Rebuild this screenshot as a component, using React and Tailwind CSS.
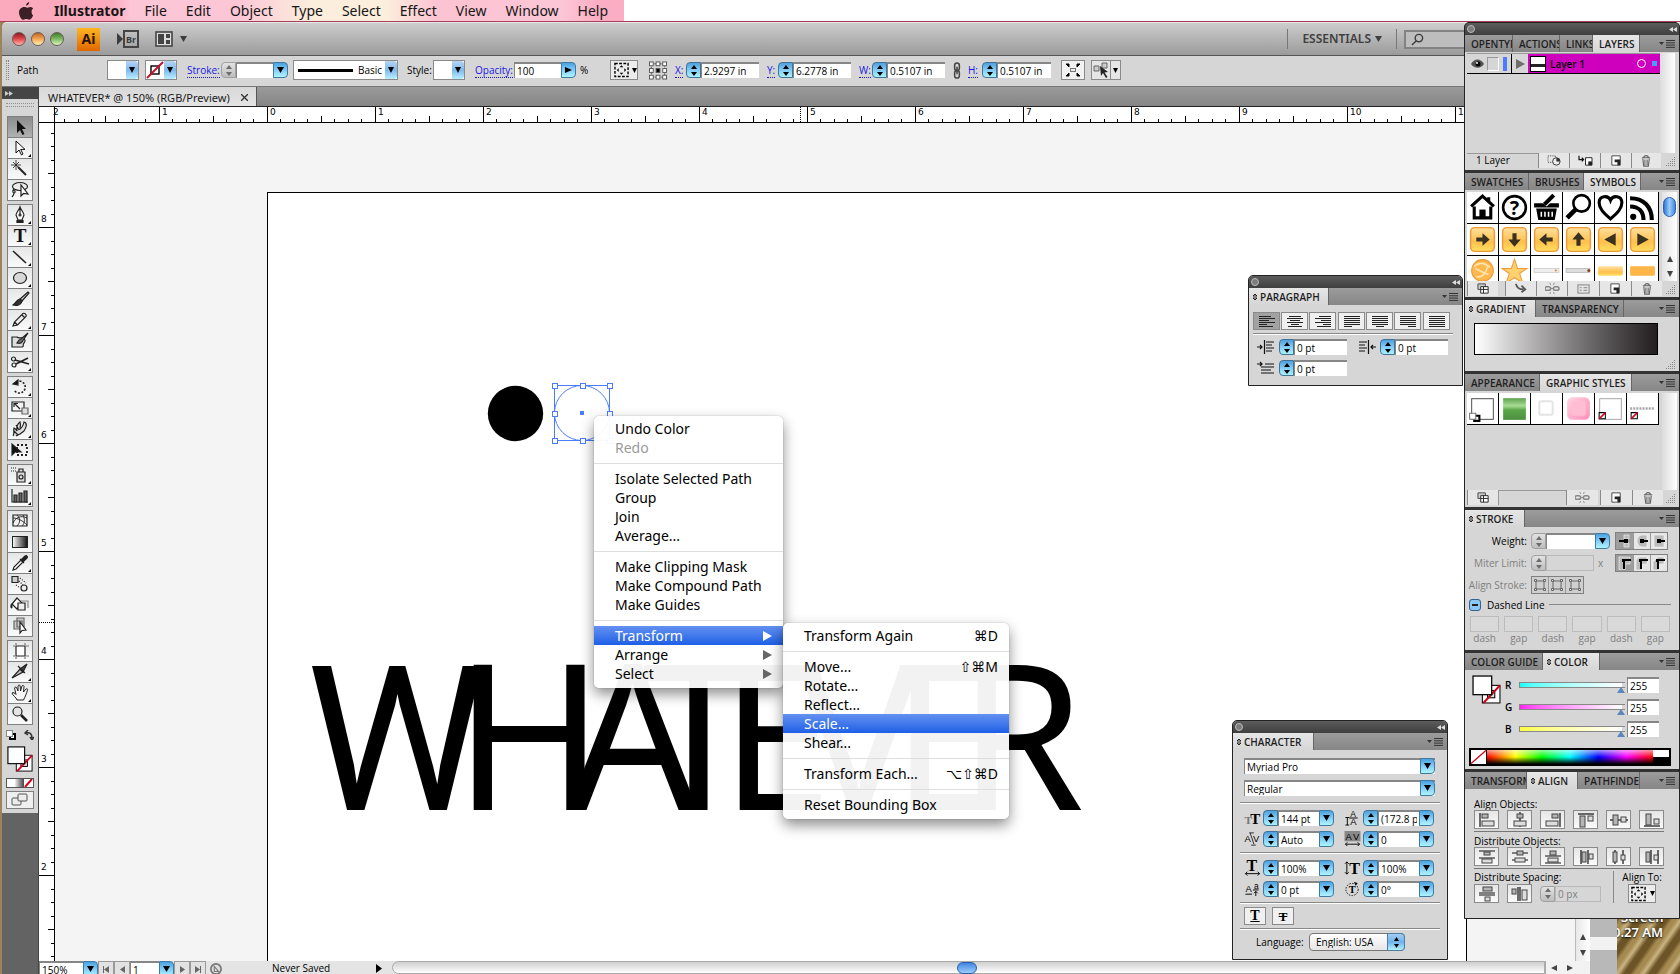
import React from 'react';

const UI = "font-['Noto_Sans',sans-serif]";
const SMALL = "font-['Open_Sans',sans-serif] text-[10px] leading-[12px]";

/* ---------- shared bits ---------- */

const Tri = ({ dir = 'down', className = 'h-2 w-2' }) => {
  const d = {
    down: 'M0 0h8L4 8z',
    up: 'M0 8h8L4 0z',
    right: 'M0 0v8l8-4z',
    left: 'M8 0v8L0 4z',
  }[dir];
  return (
    <svg viewBox="0 0 8 8" preserveAspectRatio="none" className={className} fill="currentColor">
      <path d={d} />
    </svg>
  );
};

const Stepper = ({ name, dim }) => (
  <span
    className={
      'flex h-4 w-[15px] shrink-0 flex-col items-center justify-center gap-[3px] rounded-l-[4px] border ' +
      (dim
        ? 'border-[#a0a0a0] bg-linear-to-b from-[#e2e2e2] to-[#bebebe] text-[#6c6c6c]'
        : 'border-[#3f7398] bg-linear-to-b from-[#4fa0dc] via-[#82cbf5] to-[#a9f2fd] text-black')
    }
  >
    <button type="button" aria-label={name + ' up'} disabled={dim}>
      <Tri dir="up" className="h-1 w-[6px]" />
    </button>
    <button type="button" aria-label={name + ' down'} disabled={dim}>
      <Tri className="h-1 w-[6px]" />
    </button>
  </span>
);

const DropButton = ({ name, dir }) => (
  <button
    type="button"
    aria-label={name + ' options'}
    className="flex h-4 w-[15px] shrink-0 items-center justify-center rounded-r-[4px] border border-[#3f7aa3] bg-linear-to-b from-[#4aa2e0] via-[#82ccf7] to-[#aef5ff] text-black"
  >
    <Tri dir={dir} className="h-[6px] w-[7px]" />
  </button>
);

const Field = ({ name, value, width, stepper, drop, disabled, dim, dropDir }) => (
  <span className="flex h-4 items-center">
    {stepper && <Stepper name={name} dim={dim || disabled} />}
    <input
      type="text"
      aria-label={name}
      defaultValue={value}
      disabled={disabled}
      className={
        SMALL + ' h-4 px-[2px] ' + width +
        (disabled ? ' border border-[#b9b9b9] bg-[#d6d6d6] text-[#808080]' : ' border-t-2 border-l border-[#868686] bg-white text-black')
      }
    />
    {drop && <DropButton name={name} dir={dropDir} />}
  </span>
);

const PickList = ({ name, value, width }) => (
  <span className={'relative flex h-4 items-center ' + width}>
    <select
      aria-label={name}
      className={SMALL + ' h-4 w-full appearance-none border-t-2 border-l border-[#868686] bg-white pl-[2px] text-black'}
    >
      <option>{value}</option>
    </select>
    <span className="pointer-events-none absolute right-0 flex h-4 w-[15px] items-center justify-center rounded-r-[4px] border border-[#3f7aa3] bg-linear-to-b from-[#4aa2e0] via-[#82ccf7] to-[#aef5ff]">
      <Tri className="h-[6px] w-[7px]" />
    </span>
  </span>
);

/* white fill or "none" swatch with a drop arrow */
const SwatchButton = ({ name, none }) => (
  <button type="button" aria-label={name} className="flex h-5 w-8 shrink-0 border border-[#8a8a8a] bg-white">
    <span className="flex h-full flex-1 items-center justify-center">
      {none && (
        <svg viewBox="0 0 18 18" className="h-[18px] w-[18px]">
          <rect x="5" y="5" width="8" height="8" fill="none" stroke="#000" strokeWidth="1.4" />
          <path d="M1 17L17 1" stroke="#c8102e" strokeWidth="2" />
        </svg>
      )}
    </span>
    <span className="flex h-full w-3 items-center justify-center rounded-r-[3px] bg-linear-to-b from-[#b5d5f2] via-[#7fb9ec] to-[#b8efff]">
      <Tri className="h-[6px] w-[6px]" />
    </span>
  </button>
);

const NoneStroke = ({ className }) => (
  <svg viewBox="0 0 28 28" className={className}>
    <rect x="10" y="10" width="17" height="17" fill="#fff" stroke="#000" strokeWidth="1" />
    <rect x="15" y="15" width="7" height="7" fill="#ddd" stroke="#000" />
    <path d="M11 27L27 10" stroke="#d0021b" strokeWidth="2" />
    <rect x="1" y="1" width="18" height="18" fill="#fff" stroke="#000" strokeWidth="1.2" />
  </svg>
);

/* ---------- menu bar ---------- */

const MENUS = ['File', 'Edit', 'Object', 'Type', 'Select', 'Effect', 'View', 'Window', 'Help'];

const MenuBar = () => (
  <nav className="h-[22px] shrink-0 border-b border-[#a5405a] bg-white">
    <div className="flex h-full w-[624px] items-center bg-[linear-gradient(90deg,#fba9bd_0%,#fba9bd_18%,#fdc6d6_21%,#fdc6d6_38%,#fbeedd_50%,#fbeedd_62%,#fcc3d2_70%,#fcc6d6_90%,#fbaec3_96%)] pl-[18px] text-[14px] leading-[20px] text-[#161616]">
      <svg viewBox="0 0 16 18" className="mr-5 h-[18px] w-4" fill="#3c2027">
        <path d="M11.2 0c.1 1.700-1.200 3.500-3.100 3.700C7.900 2 9.500.200 11.200 0zM13.600 9.500c0-1.800 1.300-2.600 1.600-2.900-1-1.500-2.400-1.700-3-1.700-1.300-.1-2.500.8-3.200.8-.6 0-1.600-.8-2.700-.7C3.300 5 1 7.300 1 10.500 1 14 3.500 17.800 5.500 17.800c1 0 1.500-.7 2.800-.7s1.700.7 2.800.7c1.800 0 3.400-2.500 4-4.500-.9-.4-1.500-1.800-1.500-3.800z" />
      </svg>
      <button type="button" className="mr-[19px] font-bold">Illustrator</button>
      <div className="flex gap-[19px]">
        {MENUS.map((m) => (
          <button key={m} type="button">{m}</button>
        ))}
      </div>
    </div>
  </nav>
);

/* ---------- title + control bars ---------- */

const LIGHTS = [
  { name: 'Close', cls: 'from-[#8e1a1c] via-[#e0484c] to-[#ffb3ae]' },
  { name: 'Minimize', cls: 'from-[#c0661c] via-[#f4a850] to-[#fff0b8]' },
  { name: 'Zoom', cls: 'from-[#3d7d28] via-[#7dbb60] to-[#dcf8bd]' },
];

const TitleBar = () => (
  <div className="flex h-[33px] shrink-0 items-center rounded-tl-[5px] border-t border-[#e8e8e8] bg-linear-to-b from-[#cdcdcd] to-[#9b9b9b] pl-[10px]">
    <div className="flex gap-[5px]">
      {LIGHTS.map((l) => (
        <button
          key={l.name}
          type="button"
          aria-label={l.name}
          className={'h-[14px] w-[14px] rounded-full border border-[#6d5a5a] bg-linear-to-b ' + l.cls}
        />
      ))}
    </div>
    <span className="ml-[13px] flex h-[23px] w-[23px] items-center justify-center bg-linear-to-b from-[#fdb520] to-[#e06500] text-[14px] font-bold leading-none text-[#2a1500]">
      Ai
    </span>
    <button type="button" aria-label="Bridge" className="ml-[17px] flex h-[18px] items-center text-[#3c3c3c]">
      <Tri dir="right" className="h-3 w-[6px]" />
      <span className="flex h-[18px] w-4 items-center justify-center border-2 border-[#454545] text-[9px] font-bold leading-none">Br</span>
    </button>
    <button type="button" aria-label="Arrange documents" className="ml-[16px] flex items-center gap-[7px] text-[#3c3c3c]">
      <svg viewBox="0 0 18 16" className="h-4 w-[18px]">
        <rect x="1" y="1" width="16" height="14" fill="#ddd" stroke="#444" strokeWidth="1.6" />
        <path d="M3 3h6v10H3zM11 3h4v4h-4zM11 9h4v4h-4z" fill="#444" />
      </svg>
      <Tri className="h-[6px] w-[7px]" />
    </button>
    <div className="mr-[215px] ml-auto flex items-center">
      <div className="flex h-5 items-center border-x border-[#777] px-[14px]">
        <button type="button" className="flex items-center gap-1 text-[12px] font-semibold text-[#3f3f3f]">
          ESSENTIALS <Tri className="h-[6px] w-[7px]" />
        </button>
      </div>
      <label className="ml-[7px] flex h-[19px] w-[61px] items-center border-2 border-r-0 border-[#828282] bg-[#bdbdbd] pl-[5px]">
        <svg viewBox="0 0 14 14" className="h-[13px] w-[13px] shrink-0" fill="none" stroke="#3a3a3a" strokeWidth="1.500">
          <circle cx="8.500" cy="5.500" r="4" />
          <path d="M5.500 8.500L1 13" />
        </svg>
        <input type="search" aria-label="Search" className="w-8 bg-transparent text-[10px]" />
      </label>
    </div>
  </div>
);

const Link = ({ children }) => (
  <a href="#panel" className="border-b border-dotted border-[#1717e6] leading-[13px] text-[#1717e6]">
    {children}
  </a>
);

const AlignIcon = () => (
  <svg viewBox="0 0 16 16" className="h-4 w-[15px]">
    <rect x="1" y="1" width="14" height="14" fill="none" stroke="#000" strokeWidth="1.500" strokeDasharray="3 1.500" />
    <path d="M8 3l2 2H6zM8 13l2-2H6zM3 8l2-2v4zM13 8l-2-2v4z" fill="#000" />
  </svg>
);

const ControlBar = () => (
  <div className={SMALL + ' flex h-[32px] shrink-0 items-center border-y border-t-[#555] border-b-[#777] bg-[#d6d6d6] pb-[2px] text-black'}>
    <span className="ml-1 h-5 w-[3px] border-x border-dotted border-[#8a8a8a]" />
    <span className="ml-2 w-[90px]">Path</span>
    <SwatchButton name="Fill" />
    <span className="w-[6px]" />
    <SwatchButton name="Stroke color" none />
    <span className="ml-[10px] w-[34px]"><Link>Stroke:</Link></span>
    <Field name="Stroke weight" value="" width="w-[37px]" stepper dim />
    <DropButton name="Stroke weight" />
    <button type="button" aria-label="Brush" className="ml-[5px] flex h-5 w-[105px] items-center border border-[#8a8a8a] bg-white pl-[4px]">
      <span className="h-[3px] w-[55px] bg-black" />
      <span className="ml-[5px] flex-1 text-left">Basic</span>
      <span className="flex h-full w-3 items-center justify-center rounded-r-[3px] bg-linear-to-b from-[#b5d5f2] via-[#7fb9ec] to-[#b8efff]">
        <Tri className="h-[6px] w-[6px]" />
      </span>
    </button>
    <span className="ml-[9px] w-[26px]">Style:</span>
    <SwatchButton name="Graphic style" />
    <span className="ml-[10px] w-[39px]"><Link>Opacity:</Link></span>
    <Field name="Opacity" value="100" width="w-[47px]" drop dropDir="right" />
    <span className="ml-1 w-[30px]">%</span>
    <button type="button" aria-label="Align to" className="flex h-5 w-7 items-center gap-[3px] border border-[#8a8a8a] bg-[#ececec] pl-[3px]">
      <AlignIcon /> <Tri className="h-[5px] w-[5px]" />
    </button>
    <svg viewBox="0 0 20 20" className="ml-[10px] h-[19px] w-5" fill="#fff" stroke="#555">
      <path d="M3 3h14v14H3z" fill="none" strokeDasharray="2 1" />
      {[3, 10, 17].map((y) => [3, 10, 17].map((x) => (
        <rect key={x + '-' + y} x={x - 2} y={y - 2} width="4" height="4" fill={x === 10 && y === 10 ? '#000' : '#fff'} />
      )))}
    </svg>
    <span className="ml-[7px] w-[11px]"><Link>X:</Link></span>
    <Field name="X" value="2.9297 in" width="w-[58px]" stepper />
    <span className="ml-2 w-[11px]"><Link>Y:</Link></span>
    <Field name="Y" value="6.2778 in" width="w-[58px]" stepper />
    <span className="ml-2 w-[13px]"><Link>W:</Link></span>
    <Field name="W" value="0.5107 in" width="w-[58px]" stepper />
    <svg viewBox="0 0 10 18" className="ml-[7px] h-[17px] w-[10px]" fill="none" stroke="#444" strokeWidth="1.600">
      <rect x="2.500" y="1" width="5" height="8" rx="2.500" />
      <rect x="2.500" y="9" width="5" height="8" rx="2.500" />
      <path d="M5 5v8" />
    </svg>
    <span className="ml-[6px] w-[14px]"><Link>H:</Link></span>
    <Field name="H" value="0.5107 in" width="w-[54px]" stepper />
    <button type="button" aria-label="Isolate" className="ml-[10px] flex h-5 w-6 items-center justify-center border border-[#8a8a8a] bg-[#f2f2f2]">
      <svg viewBox="0 0 16 14" className="h-[14px] w-4" fill="#000">
        <path d="M1 1h3v3zM15 1h-3v3zM1 13h3v-3zM15 13h-3v-3z" stroke="#000" />
        <rect x="5.500" y="5.500" width="5" height="3" fill="#eee" stroke="#777" />
      </svg>
    </button>
    <button type="button" aria-label="Select similar" className="ml-[6px] flex h-5 w-[30px] items-center border border-[#8a8a8a] bg-[#e6e6e6]">
      <svg viewBox="0 0 18 18" className="h-[18px] w-[18px]">
        <path d="M2 5h5v5H2zM10 2h5v5h-5z" fill="#ccc" stroke="#666" />
        <path d="M8 5l1 10 2-3 3 5 1.500-1-3-4.500 3.500-.5z" fill="#222" />
      </svg>
      <span className="flex h-full flex-1 items-center justify-center border-l border-[#8a8a8a]">
        <Tri className="h-[5px] w-[5px]" />
      </span>
    </button>
  </div>
);

/* ---------- tools ---------- */

const g = { fill: 'none', stroke: '#222', strokeWidth: 1.2 };

const TOOLS = [
  [
    { name: 'Selection', active: true, art: <path d="M9 3v13l3-3 2.500 5 2-1-2.500-5h4z" fill="#111" /> },
    { name: 'Direct Selection', more: true, art: <path d="M8 3v12l3-3 2.500 5 1.500-1-2.300-4.600H17z" fill="#fff" stroke="#111" /> },
    { name: 'Magic Wand', art: <g {...g}><path d="M10 8l8 8" strokeWidth="2" /><path d="M8 1v10M3 6h10M5 3l6 6M11 3L5 9" strokeWidth=".8" /></g> },
    { name: 'Lasso', art: <g {...g}><ellipse cx="12" cy="6.500" rx="7.500" ry="4" /><path d="M6 9c-2 2-1 4 0 4s2-2 0-3M6 13c0 2-1 3-2 4" /><path d="M13 5v11l2.500-2.500L20 14z" fill="#fff" /></g> },
  ],
  [
    { name: 'Pen', more: true, art: <g {...g}><path d="M12 2c-1 3-4 6-4 8l2 5h4l2-5c0-2-3-5-4-8zM12 2v7" fill="#fff" /><circle cx="12" cy="10" r="1" /><path d="M9 15.500h6v2H9z" fill="#222" /></g> },
    { name: 'Type', more: true, art: <text x="12" y="16" textAnchor="middle" fontFamily="Liberation Serif, serif" fontSize="19" fontWeight="bold" fill="#111">T</text> },
    { name: 'Line', more: true, art: <path d="M5 4l13 12" {...g} strokeWidth="1.600" /> },
    { name: 'Ellipse', more: true, art: <ellipse cx="12" cy="10" rx="6.500" ry="5.500" fill="#d8d8d8" stroke="#222" strokeWidth="1.200" /> },
    { name: 'Paintbrush', art: <g {...g}><path d="M20 3l-8 7 2 2 7-8z" fill="#ccc" /><path d="M12 10c-3 0-3 3-7 6 4 1 8 0 9-4z" fill="#333" /></g> },
    { name: 'Pencil', more: true, art: <path d="M5 16l1.500-4L15 3.500c1.500-.8 4 1 3 3L9.500 15zM6.500 12l3 3M14 5l3 3" {...g} fill="#eee" /> },
    { name: 'Blob Brush', art: <g {...g}><path d="M4 6h5c2 2 4 0 6 1 3 1 2 4 1 5-2 2 1 4-3 4H4z" fill="#ddd" /><path d="M20 2l-7 6c-3 1-2 2-4 4 3 1 5-.500 6-2.500z" fill="#777" /></g> },
    { name: 'Scissors', more: true, art: <g {...g}><circle cx="5.500" cy="7" r="2" /><circle cx="6" cy="13" r="2" /><path d="M7 8l14 4M8 12l12-6" strokeWidth="1.800" /></g> },
  ],
  [
    { name: 'Rotate', more: true, art: <g {...g}><path d="M8 5a6 6 0 1 1-2 8" strokeDasharray="2 1.500" strokeWidth="1.600" /><path d="M5 7l5-4v5z" fill="#111" /></g> },
    { name: 'Scale', more: true, art: <g {...g}><path d="M4 4h12v9H4z" fill="#f4f4f4" /><path d="M14 10h6v6h-6z" fill="#ddd" stroke="#666" /><path d="M12 11L7 6M6 9V5.500h4" /></g> },
    { name: 'Warp', more: true, art: <path d="M5 17c2-2 0-6 1-8 2 1 3 3 3 3s-1-6 3-9c1 3 0 7 0 7s3-2 4-7c4 1 2 6 0 9l-4 3-4 2M8 6l3 5M6 12l4 4" {...g} fill="#ddd" /> },
    { name: 'Free Transform', art: <g {...g}><path d="M9 5h10v10H9z" strokeDasharray="2 2" strokeWidth="1.800" /><path d="M4 4v11l3-3 6 0z" fill="#111" /></g> },
  ],
  [
    { name: 'Symbol Sprayer', more: true, art: <g {...g}><path d="M9 7h8v10H9zM11 7V4h4v3" fill="#ddd" /><circle cx="13" cy="12" r="2" /><path d="M3 3h6M3 6h5" strokeDasharray="1 1" /></g> },
    { name: 'Column Graph', more: true, art: <g {...g}><path d="M4 3v13h16" /><path d="M6 9h3v7H6zM11 7h3v9h-3zM16 5h3v11h-3z" fill="#666" /></g> },
  ],
  [
    { name: 'Mesh', art: <g {...g}><path d="M5 4h14v11H5z" /><path d="M5 12c3-6 8-8 14-5M9 4c4 4 3 8 0 11M15 4c2 4 2 8-1 11M5 7c5 0 10 3 14 7" strokeWidth=".9" /></g> },
    { name: 'Gradient', art: <g><rect x="4.500" y="4.500" width="15" height="11" fill="url(#toolGrad)" stroke="#222" /></g> },
    { name: 'Eyedropper', more: true, art: <g {...g}><path d="M5 17l1-3 7-7 2 2-7 7z" fill="#fff" /><path d="M12 6l4 4M13 7l4-4c2-1 3 1 2 2l-4 4z" fill="#222" /></g> },
    { name: 'Blend', art: <g {...g}><path d="M4 2.500h6v6H4z" fill="#ccc" /><circle cx="16" cy="14" r="3" fill="#eee" /><path d="M12 4l6 5M11 7l4 4M8 11l4 3" strokeDasharray="1 1.500" /></g> },
    { name: 'Live Paint', art: <g {...g}><path d="M4 9l5-6 5 5-5 6z" fill="#fff" /><path d="M10 8h7v7h-7z" fill="#eee" /><path d="M13 6h7v7" stroke="#888" /><path d="M4 9c-1 2-1 3 0 4" strokeWidth="2" /></g> },
    { name: 'Live Paint Selection', art: <g {...g}><path d="M6 5h8v8H6zM9 2h7v9H9z" fill="#ccc" stroke="#666" /><path d="M12 6v11l2-2.500 4-.500z" fill="#fff" /></g> },
  ],
  [
    { name: 'Artboard', art: <g {...g}><path d="M8 5h9v10H8z" fill="#fff" /><path d="M8 2v2M17 2v2M8 16v2M17 16v2M5 5h2M5 15h2M18 5h3M18 15h3" stroke="#777" /></g> },
    { name: 'Slice', more: true, art: <g {...g}><path d="M4 16l8-9 3 3z" fill="#bbb" /><path d="M12 7l7-5-4 8zM10 4l7 7" fill="#444" /></g> },
    { name: 'Hand', more: true, art: <path d="M9 17c-1-3-4-4-5-7 1-1 3 0 4 1.500L6.500 5c.5-1.500 2-1 2.300 0L10 8V3c.3-1.300 2-1.300 2.200 0l.3 5 1.500-5c.6-1.200 2-.6 2 .6L15.500 9 18 6c1-.8 2 .1 1.500 1.200-1 3-2 6-4 9.800z" fill="#f6f6f6" stroke="#222" /> },
    { name: 'Zoom', art: <g {...g}><circle cx="9.500" cy="7.500" r="4.500" fill="#e4e4e4" /><path d="M13 11l6 6" strokeWidth="2.600" /></g> },
  ],
];

const ToolBox = () => (
  <aside className="flex w-[37px] shrink-0 flex-col border-r border-[#444] bg-[#636363]">
    <div className="flex h-3 items-center bg-[#454545] pl-[3px] text-[#ccc]">
      <Tri dir="right" className="h-[5px] w-[4px]" />
      <Tri dir="right" className="h-[5px] w-[4px]" />
    </div>
    <div className="flex flex-col items-center bg-[#d6d6d6] pb-1">
      <div className="my-1 h-[4px] w-7 border-y border-dotted border-[#909090]" />
      <div className="mt-[5px] flex flex-col gap-[3px]">
        {TOOLS.map((group, i) => (
          <div key={i} className="flex w-[26px] flex-col gap-px border border-[#808080] bg-[#808080]">
            {group.map((t) => (
              <button
                key={t.name}
                type="button"
                aria-label={t.name}
                className={'relative h-5 w-6 ' + (t.active ? 'bg-linear-to-b from-[#8d8d8d] to-[#b0b0b0]' : 'bg-linear-to-b from-[#e6e6e6] to-[#fafafa]')}
              >
                <svg viewBox="0 0 24 20" className="h-5 w-6">
                  <defs>
                    <linearGradient id="toolGrad"><stop stopColor="#fff" /><stop offset="1" stopColor="#111" /></linearGradient>
                  </defs>
                  {t.art}
                  {t.more && <path d="M23 16v3h-3z" fill="#000" />}
                </svg>
              </button>
            ))}
          </div>
        ))}
      </div>
      <div className="mt-[5px] flex w-7 justify-between">
        <svg viewBox="0 0 10 10" className="h-[10px] w-[10px]">
          <rect x="4" y="4" width="5" height="5" fill="#fff" stroke="#000" strokeWidth="2" />
          <rect x=".5" y=".5" width="6" height="6" fill="#fff" stroke="#888" />
        </svg>
        <svg viewBox="0 0 10 10" className="h-[10px] w-[10px]" fill="none" stroke="#333" strokeWidth="1.500">
          <path d="M2 3c4-1 6 1 6 5M4 0L1 3l3 2M6 7l2 3 2-3" />
        </svg>
      </div>
      <button type="button" aria-label="Fill and stroke" className="mt-[6px]">
        <NoneStroke className="h-[26px] w-[26px]" />
      </button>
      <div className="mt-[6px] flex h-[10px] w-7 border border-[#555]">
        <span className="flex-1 bg-white" />
        <span className="w-[9px] bg-linear-to-r from-[#eee] to-[#444]" />
        <svg viewBox="0 0 9 8" className="h-2 w-[9px] bg-white"><path d="M1 8L8 0" stroke="#d0021b" strokeWidth="2" /></svg>
      </div>
      <button type="button" aria-label="Screen mode" className="mt-[3px] flex h-[18px] w-7 items-center justify-center border border-[#808080] bg-[#efefef]">
        <svg viewBox="0 0 18 14" className="h-[14px] w-[18px]" fill="#ececec" stroke="#555">
          <rect x="1" y="5" width="9" height="7" rx="1" />
          <rect x="7" y="1" width="9" height="7" rx="1" />
        </svg>
      </button>
    </div>
  </aside>
);

/* ---------- document ---------- */

const INCH = 108;
const ORIGIN_X = 228;
const EIGHT_Y = 104;

const range = (a, b) => Array.from({ length: b - a + 1 }, (_, i) => a + i);
const tickLength = (i) => (i % 8 === 0 ? 16 : i % 4 === 0 ? 7 : 4);
const rulerText = { fontFamily: 'DejaVu Sans, sans-serif', fontSize: 9 };

const TopRuler = () => (
  <svg className="h-4 w-full shrink-0 border-b border-black bg-white">
    {range(-15, 100).map((i) => {
      const x = Math.floor(ORIGIN_X + (i * INCH) / 8);
      return <rect key={i} x={x} y={16 - tickLength(i)} width="1" height={tickLength(i)} />;
    })}
    {range(-2, 12).map((n) => (
      <text key={n} x={ORIGIN_X + n * INCH + (n === -2 ? 2 : 3)} y="8" {...rulerText}>{Math.abs(n)}</text>
    ))}
    <rect x="15" y="0" width="1" height="16" />
    <path d="M761.500 0v16" stroke="#000" strokeDasharray="1 1" />
  </svg>
);

const SideRuler = () => (
  <svg className="h-full w-4 shrink-0 border-r border-black bg-white">
    {range(-7, 62).map((i) => {
      const y = Math.round(EIGHT_Y + (i * INCH) / 8);
      return <rect key={i} x={16 - tickLength(i)} y={y} width={tickLength(i)} height="1" />;
    })}
    {range(0, 6).map((n) => (
      <text key={n} x="2" y={EIGHT_Y + n * INCH - 5} {...rulerText}>{8 - n}</text>
    ))}
    <path d="M0 499.500h16" stroke="#000" strokeDasharray="1 1" />
  </svg>
);

/* tightly tracked logotype: the glyphs sit over each other */
const LETTERS = [
  { ch: 'W', x: 251, font: 'Roboto, sans-serif' },
  { ch: 'H', x: 399 },
  { ch: 'A', x: 513 },
  { ch: 'T', x: 587 },
  { ch: 'E', x: 665 },
  { ch: 'V', x: 743 },
  { ch: 'E', x: 836 },
  { ch: 'R', x: 903 },
];

const Artwork = () => (
  <svg className="absolute inset-0 h-full w-full">
    <circle cx="460.500" cy="290.500" r="27.700" />
    {LETTERS.map(({ ch, x, font }) => (
      <text key={x} x={x} y="687" fontSize="203" fontFamily={font || 'Noto Sans, sans-serif'}>{ch}</text>
    ))}
    <g fill="none" stroke="#4a7dfc">
      <circle cx="527" cy="290" r="27.500" />
      <rect x="499.500" y="262.500" width="55" height="55" />
      {[262, 290, 317].map((y) => [499, 527, 554].map((x) => (
        x === 527 && y === 290
          ? <rect key="mid" x="525.500" y="288.500" width="3" height="3" fill="#4a7dfc" />
          : <rect key={x + '.' + y} x={x - 1.5} y={y - 1.5} width="5" height="5" fill="#fff" />
      )))}
    </g>
  </svg>
);

const NavButton = ({ name, dir, end }) => (
  <button type="button" aria-label={name} className="flex h-4 w-4 shrink-0 items-center justify-center border border-[#9a9a9a] bg-[#e2e2e2] text-[#666]">
    {end && dir === 'left' && <span className="h-[7px] w-px bg-[#666]" />}
    <Tri dir={dir} className="h-[7px] w-[5px]" />
    {end && dir === 'right' && <span className="h-[7px] w-px bg-[#666]" />}
  </button>
);

const StatusBar = () => (
  <footer className={SMALL + ' flex h-[13px] shrink-0 items-start overflow-hidden bg-[#e4e4e4] text-black'}>
    <Field name="Zoom level" value="150%" width="w-[44px]" drop />
    <NavButton name="First artboard" dir="left" end />
    <NavButton name="Previous artboard" dir="left" />
    <Field name="Artboard" value="1" width="w-[29px]" drop />
    <NavButton name="Next artboard" dir="right" />
    <NavButton name="Last artboard" dir="right" end />
    <svg viewBox="0 0 14 14" className="mt-[2px] ml-1 h-3 w-3" fill="#ddd" stroke="#777" strokeWidth="2">
      <circle cx="7" cy="7" r="6" /><path d="M5 4v6h5z" strokeWidth="1.200" />
    </svg>
    <span className="mt-px ml-[50px] w-[104px]">Never Saved</span>
    <Tri dir="right" className="mt-[3px] h-[9px] w-[6px]" />
    <div className="ml-[10px] flex h-full flex-1 items-center rounded-l-full border border-[#aaa] bg-linear-to-b from-[#cfcfcf] to-white">
      <span className="ml-[564px] h-3 w-5 rounded-full border border-[#2a5fb0] bg-linear-to-b from-[#3f86e0] to-[#9ccdfb]" />
    </div>
    <div className="flex h-full w-[45px] items-center gap-[10px] border-l border-[#aaa] bg-[#f2f2f2] pl-[5px] text-[#444]">
      <Tri dir="left" className="h-[6px] w-[6px]" />
      <Tri dir="right" className="h-[6px] w-[6px]" />
    </div>
  </footer>
);

const Document = () => (
  <main className="flex min-w-0 flex-1 flex-col">
    <div className="flex h-5 shrink-0 border-b border-[#222] bg-linear-to-b from-[#9b9b9b] to-[#858585]">
      <div className="flex items-center gap-[11px] border-r border-[#555] bg-linear-to-b from-[#d8d8d8] to-[#e4e4e4] px-[9px] pt-[2px] pr-2 text-[11px] leading-[14px] text-[#1a1a1a]">
        WHATEVER* @ 150% (RGB/Preview)
        <button type="button" aria-label="Close tab">
          <svg viewBox="0 0 8 8" className="h-[7px] w-[7px]" stroke="#333" strokeWidth="1.500"><path d="M0 0l8 8M8 0L0 8" /></svg>
        </button>
      </div>
    </div>
    <TopRuler />
    <div className="flex min-h-0 flex-1">
      <SideRuler />
      <div className="relative flex-1 overflow-hidden bg-[#f4f4f4]">
        <div className="mt-[69px] ml-[212px] h-full w-[1200px] border border-black bg-white" />
        <Artwork />
      </div>
      <div className="flex w-[15px] shrink-0 flex-col items-center justify-end gap-[10px] border-l border-[#bbb] bg-linear-to-r from-[#e8e8e8] to-white pb-[5px] text-[#444]">
        <Tri dir="up" className="h-[6px] w-[6px]" />
        <Tri className="h-[6px] w-[6px]" />
      </div>
    </div>
    <StatusBar />
  </main>
);

/* ---------- panels ---------- */

const MenuGlyph = () => (
  <button type="button" aria-label="Panel menu" className="mr-1 ml-auto flex items-center gap-[2px] text-[#333]">
    <Tri className="h-[3px] w-[5px]" />
    <svg viewBox="0 0 9 8" className="h-2 w-[9px]" stroke="#333"><path d="M0 .5h9M0 2.800h9M0 5.100h9M0 7.400h9" /></svg>
  </button>
);

const Updown = () => (
  <svg viewBox="0 0 6 8" className="mr-[2px] h-2 w-[6px] shrink-0" fill="none" stroke="#222"><path d="M1 3l2-2 2 2zM1 5l2 2 2-2z" /></svg>
);

const Tabs = ({ tabs }) => (
  <div className="flex h-[17px] items-center bg-linear-to-b from-[#9c9c9c] to-[#868686]">
    {tabs.map((t) => (
      <button
        key={t.label}
        type="button"
        className={
          "flex h-full shrink-0 items-center overflow-hidden border-r border-[#666] font-['Open_Sans',sans-serif] text-[10px] font-semibold leading-none whitespace-nowrap text-[#1e1e1e] " +
          t.width + (t.active ? ' bg-linear-to-b from-[#e6e6e6] to-[#d6d6d6]' : '') + (t.updown ? ' pl-[3px]' : ' pl-[6px]')
        }
      >
        {t.updown && <Updown />}
        {t.label}
      </button>
    ))}
    <MenuGlyph />
  </div>
);

const PanelHead = () => (
  <div className="flex h-3 items-center justify-between rounded-t-[4px] bg-linear-to-b from-[#5c5c5c] to-[#3f3f3f] px-[2px]">
    <button type="button" aria-label="Close panel" className="h-2 w-2 rounded-full border border-[#bbb] bg-[#7c7c7c]" />
    <span className="flex text-[#ddd]">
      <Tri dir="left" className="h-[5px] w-[4px]" />
      <Tri dir="left" className="h-[5px] w-[4px]" />
    </span>
  </div>
);

const FOOT = {
  library: <g><path d="M2 2h8v6H2z" fill="#ccc" stroke="#444" /><path d="M5 5h8v7H5zM5 8h8M8 5v7" fill="#fff" stroke="#222" /></g>,
  place: <path d="M2 2c1 4 3 6 8 6M8 4l4 4-4 3" fill="none" stroke="#555" strokeWidth="2" />,
  unlink: <g fill="none" stroke="#888"><rect x="0" y="5" width="6" height="4" rx="2" strokeWidth="1.600" /><rect x="9" y="5" width="6" height="4" rx="2" strokeWidth="1.600" /><path d="M5 1l1 2M10 1L9 3M5 13l1-2M10 13l-1-2M6 7h3" /></g>,
  options: <path d="M2 3h12v9H2zM4 6h2M8 6h4M4 9h2M8 9h4" fill="none" stroke="#999" strokeWidth="1.400" />,
  fresh: <g><path d="M3 2h9v10H3z" fill="#fff" stroke="#444" /><path d="M6 6h6v6H9V9H6z" fill="#222" /></g>,
  trash: <g fill="none" stroke="#666"><path d="M3 4h9M5 4c0-3 5-3 5 0M4 5l1 8h5l1-8" strokeWidth="1.200" /><path d="M6 6v6M7.500 6v6M9 6v6" strokeWidth=".8" /></g>,
  mask: <g><path d="M1 2h8v7H1z" fill="none" stroke="#444" strokeDasharray="1 1" /><circle cx="10" cy="8" r="4" fill="#eee" stroke="#333" /><path d="M10 4v4h4a4 4 0 0 0-4-4z" fill="#333" /></g>,
  sub: <g><path d="M1 2v4h5M4 4l2 2-2 2" fill="none" stroke="#111" strokeWidth="1.300" /><path d="M8 4h7v8H8z" fill="#fff" stroke="#222" /><path d="M11 8h4v4h-4z" fill="#222" /></g>,
};

const FootButton = ({ icon, width = 'w-[31px]' }) => (
  <button type="button" aria-label={icon} className={'flex h-full items-center justify-center border-l border-[#8a8a8a] bg-[#e6e6e6] ' + width}>
    <svg viewBox="0 0 16 14" className="h-[13px] w-[15px]">{FOOT[icon]}</svg>
  </button>
);

const Grip = () => (
  <svg viewBox="0 0 10 10" className="mr-[3px] mb-px ml-auto h-[10px] w-[10px] self-end" fill="#888">
    <path d="M8 0h1v1H8zM8 2h1v1H8zM8 4h1v1H8zM8 6h1v1H8zM8 8h1v1H8zM6 2h1v1H6zM6 4h1v1H6zM6 6h1v1H6zM6 8h1v1H6zM4 4h1v1H4zM4 6h1v1H4zM4 8h1v1H4zM2 6h1v1H2zM2 8h1v1H2zM0 8h1v1H0z" />
  </svg>
);

const LayersPanel = () => (
  <section>
    <Tabs tabs={[{ label: 'OPENTYPE', width: 'w-[48px]' }, { label: 'ACTIONS', width: 'w-[47px]' }, { label: 'LINKS', width: 'w-[33px]' }, { label: 'LAYERS', width: 'w-[47px]', active: true }]} />
    <div className="flex h-[118px] flex-col bg-[#d6d6d6] pt-px pb-[2px] pl-[2px]">
      <div className="flex flex-1">
        <div className="flex-1 border-t border-[#999]">
          <div className="flex h-5 items-center border-b border-black">
            <button type="button" aria-label="Toggle visibility" className="ml-1 flex h-[14px] w-[13px] items-center">
              <svg viewBox="0 0 13 10" className="h-[10px] w-[13px]"><path d="M0 5c3-6 10-6 13 0-3 5-10 5-13 0z" fill="#555" /><circle cx="7" cy="5" r="2.500" fill="#000" /><circle cx="6" cy="4" r="1" fill="#fff" /></svg>
            </button>
            <span className="ml-[3px] h-[14px] w-3 border border-[#999] border-r-white border-b-white" />
            <span className="ml-1 h-[14px] w-1 bg-[#4b7bff]" />
            <span className="ml-1 h-full w-px bg-black" />
            <Tri dir="right" className="ml-1 h-[10px] w-[9px] text-[#6e6e6e]" />
            <div className="ml-[3px] flex h-full flex-1 items-center bg-[#cf00bd] pl-[2px]">
              <span className="flex h-4 w-4 items-center border border-black bg-white"><span className="mt-[3px] h-[3px] w-full bg-[#222]" /></span>
              <span className={SMALL + ' ml-1 font-semibold text-black'}>Layer 1</span>
              <span className="ml-auto h-[9px] w-[9px] rounded-full border border-white" />
              <span className="mr-[3px] ml-[6px] h-[5px] w-[5px] bg-[#4b9bff]" />
            </div>
          </div>
        </div>
        <div className="mr-1 w-[15px] bg-linear-to-r from-[#dcdcdc] to-white" />
      </div>
      <div className="flex h-[15px] items-center">
        <span className={SMALL + ' flex h-full w-[71px] items-center border-t border-[#999] pb-[2px] pl-[9px]'}>1 Layer</span>
        <FootButton icon="mask" />
        <FootButton icon="sub" />
        <FootButton icon="fresh" />
        <FootButton icon="trash" width="w-[30px]" />
        <Grip />
      </div>
    </div>
  </section>
);

const k = { fill: 'none', stroke: '#000' };
const SYMBOLS = [
  { n: 'home', a: <g><path d="M4 14L15 4l11 10" {...k} strokeWidth="3" /><path d="M7 14v11h16V14M21 5v5" {...k} strokeWidth="3" /><path d="M12 17h6v8h-6z" /></g> },
  { n: 'help', a: <g><circle cx="15" cy="15" r="11" {...k} strokeWidth="2.500" /><text x="15" y="22" textAnchor="middle" fontFamily="Noto Sans, sans-serif" fontSize="19" fontWeight="bold">?</text></g> },
  { n: 'basket', a: <g><path d="M3 11h24v4H3zM5 16h20l-2 11H7z" /><path d="M10 19v5M13.500 19v5M17 19v5M20.500 19v5" stroke="#fff" strokeWidth="1.500" /><path d="M13 12l9-9" stroke="#fff" strokeWidth="6" /><path d="M13 12l9-9" {...k} strokeWidth="4" /></g> },
  { n: 'search', a: <g><circle cx="18" cy="11" r="8" {...k} strokeWidth="2.500" /><path d="M12 17l-8 8" {...k} strokeWidth="4.500" /></g> },
  { n: 'heart', a: <path d="M15 26C8 20 4 16 4 10.500 4 3 13 3 15 8c2-5 11-5 11 2.500C26 16 22 20 15 26z" {...k} strokeWidth="3" /> },
  { n: 'feed', a: <g><circle cx="6" cy="24" r="3" /><path d="M3 14c8 0 13 5 13 13M3 6c13 0 21 8 21 21" {...k} strokeWidth="4" /></g> },
];
const ARROWS = [
  'M9 13h6V9l7 6-7 6v-4H9z', 'M13 9v6H9l6 7 6-7h-4V9z', 'M21 13h-6V9l-7 6 7 6v-4h6z',
  'M13 21v-6H9l6-7 6 7h-4v6z', 'M20 9v12L9 15z', 'M10 9v12l11-6z',
];

const Cell = ({ name, children, height = 'h-[31px]' }) => (
  <button type="button" aria-label={name} className={'w-[31px] overflow-hidden bg-white ' + height}>
    <svg viewBox="0 0 30 30" className="h-[31px] w-[31px]">{children}</svg>
  </button>
);

const SymbolsPanel = () => (
  <section>
    <Tabs tabs={[{ label: 'SWATCHES', width: 'w-[64px]' }, { label: 'BRUSHES', width: 'w-[55px]' }, { label: 'SYMBOLS', width: 'w-[57px]', active: true }]} />
    <div className="flex h-[107px] flex-col bg-[#d6d6d6] pt-[2px] pl-[2px]">
      <div className="flex h-[89px] justify-between">
        <div className="grid grid-cols-[repeat(6,31px)] gap-px self-start bg-black pr-px">
          {SYMBOLS.map((s) => <Cell key={s.n} name={s.n}>{s.a}</Cell>)}
          {ARROWS.map((d) => (
            <Cell key={d} name="arrow button">
              <defs>
                <linearGradient id="amber" x2="0" y2="1"><stop stopColor="#ffe0a0" /><stop offset=".6" stopColor="#ffc04d" /><stop offset="1" stopColor="#ffdf62" /></linearGradient>
              </defs>
              <rect x="3.500" y="3.500" width="23" height="23" rx="4" fill="url(#amber)" stroke="#f09a36" strokeWidth="1.400" />
              <path d={d} fill="#3a3220" />
            </Cell>
          ))}
          <Cell name="orb" height="h-[25px]"><circle cx="15" cy="14" r="10.500" fill="#ffb84e" stroke="#f09a36" /><path d="M7 10c4-4 10-4 15 1M9 20c5 1 9-2 11-10M8 12c4 2 9 5 13 6" fill="none" stroke="#ffe6b0" strokeWidth="1.500" /></Cell>
          <Cell name="star" height="h-[25px]"><path d="M15 3l3 9h9l-7 5 3 9-8-5-8 5 3-9-7-5h9z" fill="#ffd070" stroke="#f09a36" /></Cell>
          <Cell name="slider" height="h-[25px]"><rect x="3" y="12" width="24" height="4" fill="#eee" stroke="#ccc" strokeWidth=".8" /><circle cx="24" cy="14" r="1" fill="#e08020" /></Cell>
          <Cell name="slider dark" height="h-[25px]"><rect x="3" y="12" width="23" height="4" fill="#ddd" stroke="#bbb" strokeWidth=".8" /><circle cx="25" cy="14" r="1.500" fill="#842" /></Cell>
          <Cell name="bar light" height="h-[25px]"><rect x="3" y="10" width="24" height="9" rx="1" fill="url(#amber)" /></Cell>
          <Cell name="bar" height="h-[25px]"><rect x="3" y="10" width="24" height="9" rx="1" fill="#ffb547" /></Cell>
        </div>
        <div className="mr-[2px] flex w-[15px] flex-col items-center gap-[9px] bg-linear-to-r from-[#e2e2e2] to-white text-[#444]">
          <span className="mt-[5px] mb-auto h-5 w-[13px] rounded-full border border-[#2a5fb0] bg-linear-to-r from-[#2f77d8] via-[#9ccdfb] to-[#3f86e0]" />
          <Tri dir="up" className="h-[6px] w-[6px]" />
          <Tri className="mb-1 h-[6px] w-[6px]" />
        </div>
      </div>
      <div className="flex h-[15px] items-center">
        <FootButton icon="library" />
        <FootButton icon="place" width="ml-[7px] w-[31px]" />
        <FootButton icon="unlink" />
        <FootButton icon="options" width="w-[32px]" />
        <FootButton icon="fresh" width="w-[32px]" />
        <FootButton icon="trash" width="w-[31px]" />
        <Grip />
      </div>
    </div>
  </section>
);

const GradientPanel = () => (
  <section>
    <Tabs tabs={[{ label: 'GRADIENT', width: 'w-[71px]', active: true, updown: true }, { label: 'TRANSPARENCY', width: 'w-[88px]' }]} />
    <div className="flex h-[54px] bg-[#d6d6d6] pt-[6px] pl-[9px]">
      <div className="h-8 w-[184px] border border-black bg-linear-to-r from-white to-[#231f20]" />
      <Grip />
    </div>
  </section>
);

const StylesPanel = () => (
  <section>
    <Tabs tabs={[{ label: 'APPEARANCE', width: 'w-[75px]' }, { label: 'GRAPHIC STYLES', width: 'w-[92px]', active: true }]} />
    <div className="flex h-[116px] flex-col bg-[#d6d6d6] pt-[2px] pb-[2px] pl-[2px]">
      <div className="flex flex-1 justify-between">
        <div className="grid grid-cols-[repeat(6,31px)] gap-px self-start bg-black pr-px pb-px">
          <Cell name="default style"><rect x="4.500" y="5.500" width="21" height="20" fill="#fff" stroke="#555" /><path d="M7 22h5v5H7z" fill="#fff" stroke="#000" strokeWidth="2" /><path d="M2.500 19.500h6v6h-6z" fill="#fff" stroke="#777" /></Cell>
          <Cell name="green style"><defs><linearGradient id="leaf" x2="0" y2="1"><stop stopColor="#5ea14d" /><stop offset=".35" stopColor="#a8dc94" /><stop offset=".55" stopColor="#5aa548" /><stop offset="1" stopColor="#4f8f3f" /></linearGradient></defs><rect x="4" y="5" width="22" height="21" fill="url(#leaf)" /></Cell>
          <Cell name="soft style"><rect x="8" y="8" width="13" height="13" rx="2" fill="#fff" stroke="#e4e4e4" strokeWidth="2" /></Cell>
          <Cell name="pink style"><defs><linearGradient id="rose" x2="1" y2="1"><stop stopColor="#ffd5e2" /><stop offset="1" stopColor="#ff8fb8" /></linearGradient></defs><rect x="4" y="4" width="22" height="22" rx="5" fill="url(#rose)" /><rect x="8" y="8" width="14" height="14" rx="2" fill="#ffbdd3" /></Cell>
          <Cell name="empty style"><rect x="4.500" y="5.500" width="21" height="20" fill="#fff" stroke="#aaa" /><path d="M4 19h6v6H4z" fill="#fff" stroke="#000" /><path d="M4 25l6-6" stroke="#d0021b" strokeWidth="1.500" /></Cell>
          <Cell name="rope style"><path d="M3 15h24" stroke="#aaa" strokeWidth="2.500" strokeDasharray="2 1" /><path d="M4 19h6v6H4z" fill="#fff" stroke="#000" /><path d="M4 25l6-6" stroke="#d0021b" strokeWidth="1.500" /></Cell>
        </div>
        <div className="mr-[2px] w-[15px] bg-linear-to-r from-[#dcdcdc] to-white" />
      </div>
      <div className="flex h-[15px] items-center">
        <FootButton icon="library" />
        <span className="h-full w-[68px] border-t border-l border-[#999]" />
        <FootButton icon="unlink" width="w-[32px]" />
        <FootButton icon="fresh" width="ml-[2px] w-[32px]" />
        <FootButton icon="trash" />
        <Grip />
      </div>
    </div>
  </section>
);

const CAPS = [
  { d: 'M6 1h5v4H6zM6 9h5v4H6z', pin: 'M1 6h6v2H1zM6 5h4v4H6z' },
  { d: 'M12 1H7a5 6 0 0 0 0 12h5z', pin: 'M8 6h5v2H8zM5 5h4v4H5z' },
  { d: 'M12 1H2v12h10z', pin: 'M8 6h5v2H8zM5 5h4v4H5z' },
];
const JOINS = [
  { d: 'M1 1h11v7H7v6H1z', pin: 'M4 3h9v2H7v8H5V6H4z' },
  { d: 'M12 1H6a5 5 0 0 0-5 5v8h6V8h5z', pin: 'M4 3h9v2H7v8H5V6H4z' },
  { d: 'M12 1H6L1 6v8h6V8h5z', pin: 'M4 3h9v2H7v8H5V6H4z' },
];

const ToggleRow = ({ items, name }) => (
  <div className="flex border border-[#808080]">
    {items.map((it, i) => (
      <button
        key={it.d}
        type="button"
        aria-label={name + ' ' + (i + 1)}
        className={'flex h-4 w-[17px] items-center justify-center ' + (i ? 'border-l border-[#999] bg-[#e6e6e6]' : 'bg-[#9d9d9d]')}
      >
        <svg viewBox="0 0 14 14" className="h-[14px] w-[14px]">
          <path d={it.d} fill="#bbb" stroke="#f2f2f2" strokeWidth=".7" />
          <path d={it.pin} fill="#000" />
        </svg>
      </button>
    ))}
  </div>
);

const StrokePanel = () => (
  <section className={SMALL}>
    <Tabs tabs={[{ label: 'STROKE', width: 'w-[60px]', active: true, updown: true }]} />
    <div className="h-[123px] bg-[#d6d6d6] pt-[3px]">
      <div className="flex h-[22px] items-center">
        <span className="w-[66px] shrink-0 pr-1 text-right">Weight:</span>
        <Field name="Weight" value="" width="w-[49px]" stepper dim />
        <DropButton name="Weight" />
        <span className="w-[5px]" />
        <ToggleRow items={CAPS} name="Cap" />
      </div>
      <div className="flex h-[22px] items-center text-[#808080]">
        <span className="w-[66px] shrink-0 pr-1 text-right">Miter Limit:</span>
        <Field name="Miter limit" value="" width="w-[48px]" stepper disabled />
        <span className="w-[21px] pl-1">x</span>
        <ToggleRow items={JOINS} name="Join" />
      </div>
      <div className="flex h-[22px] items-center text-[#808080]">
        <span className="w-[66px] shrink-0 pr-1 text-right">Align Stroke:</span>
        <span className="flex border border-[#808080]">
          {['center', 'inside', 'outside'].map((n) => (
            <button key={n} type="button" aria-label={'Align stroke ' + n} className="flex h-4 w-[17px] items-center justify-center border-r border-[#999] bg-[#cfcfcf] last:border-r-0">
              <svg viewBox="0 0 14 14" className="h-[14px] w-[14px]" fill="none" stroke="#666"><path d="M3 3h8v8H3z" /><path d="M1.500 1.500h2v2h-2zM10.500 1.500h2v2h-2zM1.500 10.500h2v2h-2zM10.500 10.500h2v2h-2z" fill="#ddd" /></svg>
            </button>
          ))}
        </span>
      </div>
      <div className="flex h-[17px] items-center">
        <label className="flex items-center">
          <input type="checkbox" className="ml-1 h-3 w-3 appearance-none rounded-[3px] border border-[#35618c] bg-[#8cc8f3] bg-[linear-gradient(#222,#222)] bg-[length:6px_2px] bg-center bg-no-repeat" />
          <span className="ml-[6px]">Dashed Line</span>
        </label>
        <span className="mr-2 ml-1 h-px flex-1 bg-[#888]" />
      </div>
      <div className="mt-[3px] grid grid-cols-6 gap-[5px] pr-[9px] pl-[5px] text-center text-[#808080]">
        {['dash', 'gap', 'dash', 'gap', 'dash', 'gap'].map((t, i) => (
          <label key={i} className="block">
            <input type="text" disabled className="block h-4 w-full border border-[#bcbcbc] bg-[#d9d9d9]" />
            <span className="block">{t}</span>
          </label>
        ))}
      </div>
    </div>
  </section>
);

const CHANNELS = [
  { c: 'R', bg: 'from-[#00ffff] to-white' },
  { c: 'G', bg: 'from-[#ff1cf2] to-white' },
  { c: 'B', bg: 'from-[#ffff3c] to-white' },
];

const ColorPanel = () => (
  <section className={SMALL}>
    <Tabs tabs={[{ label: 'COLOR GUIDE', width: 'w-[78px]' }, { label: 'COLOR', width: 'w-[57px]', active: true, updown: true }]} />
    <div className="h-[99px] bg-[#d6d6d6] pt-[4px]">
      <div className="flex">
        <button type="button" aria-label="Fill and stroke color" className="mt-px ml-[7px] self-start">
          <NoneStroke className="h-[29px] w-[29px]" />
        </button>
        <div className="ml-[4px] flex flex-1 flex-col">
          {CHANNELS.map((ch) => (
            <div key={ch.c} className="flex h-[22px] items-center">
              <span className="w-[14px] font-semibold">{ch.c}</span>
              <input
                type="range"
                aria-label={ch.c + ' slider'}
                min="0"
                max="255"
                defaultValue="255"
                className={'h-[6px] w-[106px] appearance-none rounded-none bg-linear-to-r [&::-webkit-slider-thumb]:mt-[10px] [&::-webkit-slider-thumb]:h-[6px] [&::-webkit-slider-thumb]:w-2 [&::-webkit-slider-thumb]:appearance-none [&::-webkit-slider-thumb]:bg-[#5b87bd] [&::-webkit-slider-thumb]:[clip-path:polygon(50%_0,100%_100%,0_100%)] bg-[length:102px_6px] bg-no-repeat border-y border-l border-[#888] ' + ch.bg}
              />
              <span className="ml-[2px]"><Field name={ch.c} value="255" width="w-8" /></span>
            </div>
          ))}
        </div>
      </div>
      <div className="mt-[8px] ml-1 flex h-[18px] w-[202px] border-2 border-black">
        <svg viewBox="0 0 16 14" className="h-full w-4 border-r border-black bg-white"><path d="M0 14L16 0" stroke="#d0021b" strokeWidth="1.500" /></svg>
        <span className="relative flex-1 bg-[linear-gradient(90deg,#f00,#ff0_17%,#0f0_33%,#0ff_50%,#00f_67%,#f0f_84%,#f00)]">
          <span className="absolute inset-0 bg-linear-to-b from-white/60 via-transparent to-black" />
        </span>
        <span className="w-4 bg-linear-to-b from-white from-50% to-black to-50%" />
      </div>
    </div>
  </section>
);

/* each glyph: guide line(s) plus two blocks */
const GLYPHS = {
  left: ['M3 1v14', [[5, 2, 6, 4], [5, 9, 12, 5]]],
  hcenter: ['M10 0v15', [[7, 2, 6, 4], [4, 9, 12, 5]]],
  right: ['M17 1v14', [[9, 2, 6, 4], [3, 9, 12, 5]]],
  top: ['M2 2h16', [[4, 4, 5, 11], [12, 4, 5, 5]]],
  vcenter: ['M1 8h18', [[4, 3, 5, 10], [12, 5, 5, 5]]],
  bottom: ['M2 14h16', [[4, 2, 5, 11], [12, 7, 5, 5]]],
  dtop: ['M2 2h16M2 9h16', [[7, 3, 6, 3], [5, 10, 10, 4]]],
  dvc: ['M2 4h16M2 11h16', [[7, 2, 6, 4], [5, 9, 10, 4]]],
  dbottom: ['M2 7h16M2 14h16', [[7, 2, 6, 4], [5, 9, 10, 4]]],
  dleft: ['M5 1v14M12 1v14', [[6, 3, 4, 10], [13, 5, 4, 5]]],
  dhc: ['M6 1v14M14 1v14', [[4, 3, 4, 10], [12, 6, 4, 5]]],
  dright: ['M9 1v14M16 1v14', [[4, 3, 4, 10], [12, 6, 4, 5]]],
  svert: ['M2 7h16M2 9h16', [[6, 1, 9, 4], [8, 11, 5, 4]]],
  shorz: ['M8 1v14M10 1v14', [[2, 3, 4, 5], [12, 4, 5, 10]]],
};

const AlignButton = ({ kind }) => (
  <button type="button" aria-label={kind} className="flex h-[19px] w-[25px] items-center justify-center border border-[#8a8a8a] bg-linear-to-b from-[#e6e6e6] to-[#fafafa]">
    <svg viewBox="0 0 20 16" className="h-4 w-5" stroke="#111">
      <path d={GLYPHS[kind][0]} fill="none" strokeWidth="1.200" />
      {GLYPHS[kind][1].map(([x, y, w, h], i) => (
        <rect key={i} x={x} y={y} width={w} height={h} fill={i ? '#ddd' : '#b5b5b5'} stroke="#444" />
      ))}
    </svg>
  </button>
);

const AlignPanel = () => (
  <section className={SMALL}>
    <Tabs tabs={[{ label: 'TRANSFORM', width: 'w-[62px]' }, { label: 'ALIGN', width: 'w-[51px]', active: true, updown: true }, { label: 'PATHFINDER', width: 'w-[62px]' }]} />
    <div className="h-[129px] bg-[#d6d6d6] px-[9px] pt-[9px]">
      <h3>Align Objects:</h3>
      <div className="mr-[6px] flex justify-between border-b border-[#777] pb-[2px]">
        {['left', 'hcenter', 'right', 'top', 'vcenter', 'bottom'].map((n) => <AlignButton key={n} kind={n} />)}
      </div>
      <h3 className="mt-[3px]">Distribute Objects:</h3>
      <div className="mr-[6px] flex justify-between border-b border-[#777] pb-[2px]">
        {['dtop', 'dvc', 'dbottom', 'dleft', 'dhc', 'dright'].map((n) => <AlignButton key={n} kind={n} />)}
      </div>
      <div className="mt-[2px] flex justify-between">
        <div>
          <h3>Distribute Spacing:</h3>
          <div className="mt-px flex items-center gap-2">
            <AlignButton kind="svert" />
            <AlignButton kind="shorz" />
            <Field name="Spacing" value="0 px" width="w-[46px]" stepper disabled />
          </div>
        </div>
        <div className="mr-2 border-l border-[#888] pl-2">
          <h3>Align To:</h3>
          <button type="button" aria-label="Align to" className="mt-px ml-[6px] flex h-[19px] w-7 items-center gap-1 border border-[#8a8a8a] bg-[#ececec] pl-[2px]">
            <AlignIcon /> <Tri className="h-[5px] w-[5px]" />
          </button>
        </div>
      </div>
    </div>
  </section>
);

const Dock = () => (
  <aside className="absolute top-[22px] right-0 flex w-[216px] flex-col gap-[3px] rounded-t-[5px] border border-[#222] bg-[#333] text-black">
    <div>
      <PanelHead />
      <LayersPanel />
    </div>
    <SymbolsPanel />
    <GradientPanel />
    <StylesPanel />
    <StrokePanel />
    <ColorPanel />
    <AlignPanel />
  </aside>
);

const RAGGED = [12, 16, 10, 16, 8, 14];
const PARA = [
  { side: 'left', lines: RAGGED },
  { side: 'center', lines: RAGGED },
  { side: 'right', lines: RAGGED },
  { side: 'left', lines: [16, 16, 16, 16, 16, 8] },
  { side: 'center', lines: [16, 16, 16, 16, 16, 8] },
  { side: 'right', lines: [16, 16, 16, 16, 16, 8] },
  { side: 'left', lines: [16, 16, 16, 16, 16, 16] },
];

const ParaLines = ({ lines, side }) => (
  <svg viewBox="0 0 16 11" className="h-[11px] w-4">
    {lines.map((w, i) => (
      <rect key={i} x={side === 'left' ? 0 : side === 'right' ? 16 - w : (16 - w) / 2} y={i * 2} width={w} height="1" fill="#222" />
    ))}
  </svg>
);

const Indent = ({ d }) => (
  <svg viewBox="0 0 18 14" className="h-[14px] w-[18px] shrink-0" fill="none" stroke="#111" strokeWidth="1.200"><path d={d} /></svg>
);

const ParagraphPanel = () => (
  <section className="absolute top-[275px] right-[217px] w-[215px] rounded-t-[5px] border border-[#222] bg-[#d6d6d6]">
    <PanelHead />
    <Tabs tabs={[{ label: 'PARAGRAPH', width: 'w-[80px]', active: true, updown: true }]} />
    <div className="px-1 pt-[7px] pb-[9px]">
      <div className="flex gap-px">
        {PARA.map((p, i) => (
          <button
            key={i}
            type="button"
            aria-label={'Paragraph alignment ' + (i + 1)}
            className={
              'flex h-[18px] w-[27px] items-center justify-center border border-[#8a8a8a] ' +
              (i === 0 ? 'bg-[#a2a2a2]' : 'bg-[#efefef]') + (i === 3 || i === 6 ? ' ml-px' : '')
            }
          >
            <ParaLines lines={p.lines} side={p.side} />
          </button>
        ))}
      </div>
      <div className="mt-[3px] mr-[5px] h-[2px] border-t border-[#888] bg-white" />
      <div className="mt-1 grid grid-cols-[101px_1fr] gap-y-[5px] pl-1">
        <div className="flex items-center gap-1">
          <Indent d="M0 7h5M3 5l2 2-2 2M7.500 0v14M9 2h8M9 5h6M9 8h8M9 11h6" />
          <Field name="Left indent" value="0 pt" width="w-[53px]" stepper />
        </div>
        <div className="flex items-center gap-1">
          <Indent d="M18 7h-5M15 5l-2 2 2 2M10.500 0v14M1 2h8M1 5h6M1 8h8M1 11h6" />
          <Field name="Right indent" value="0 pt" width="w-[53px]" stepper />
        </div>
        <div className="flex items-center gap-1">
          <Indent d="M0 3h5M3 1l2 2-2 2M8 3h9M4 6h13M4 9h10M4 12h13" />
          <Field name="First-line indent" value="0 pt" width="w-[53px]" stepper />
        </div>
      </div>
    </div>
  </section>
);

const serif = { fontFamily: 'Liberation Serif, serif', fontWeight: 'bold' };
const CHAR_FIELDS = [
  [
    { n: 'Font size', v: '144 pt', a: <g {...serif}><text x="0" y="15" fontSize="12" fill="#777">T</text><text x="6" y="15" fontSize="16">T</text></g> },
    { n: 'Leading', v: '(172.8 pt)', a: <g fontFamily="Liberation Sans"><text x="6" y="7" fontSize="9">A</text><text x="6" y="16" fontSize="10">A</text><path d="M3 8v8M1 8h4M1 16h4M5 8.500h9" stroke="#000" /></g> },
    { n: 'Kerning', v: 'Auto', a: <g fontFamily="Liberation Sans"><text x="0" y="12" fontSize="10">A</text><text x="9" y="12" fontSize="10">V</text><path d="M6 2l4 12M5 2h5M7 15h5" stroke="#000" strokeWidth=".8" /></g> },
    { n: 'Tracking', v: '0', a: <g fontFamily="Liberation Sans"><rect width="17" height="11" fill="#888" /><text x="1" y="10" fontSize="10">A</text><text x="9" y="10" fontSize="10">V</text><path d="M1 14h15M3 12l-2 2 2 2M14 12l2 2-2 2" fill="none" stroke="#000" /></g> },
  ],
  [
    { n: 'Horizontal scale', v: '100%', a: <g {...serif}><text x="2" y="12" fontSize="17">T</text><path d="M1 14.500h15M3 12.500l-2 2 2 2M14 12.500l2 2-2 2" fill="none" stroke="#000" /></g> },
    { n: 'Vertical scale', v: '100%', a: <g {...serif}><text x="5" y="15" fontSize="17">T</text><path d="M2.500 2v13M.500 4l2-2 2 2M.500 13l2 2 2-2" fill="none" stroke="#000" /></g> },
    { n: 'Baseline shift', v: '0 pt', a: <g fontFamily="Liberation Sans"><text x="1" y="12" fontSize="10">A</text><text x="10" y="8" fontSize="9">a</text><path d="M1 14h7M9 9.500h6M12 16v-5M10 13l2-2 2 2" fill="none" stroke="#000" /></g> },
    { n: 'Rotation', v: '0°', a: <g {...serif}><circle cx="8" cy="9" r="6.500" fill="none" stroke="#000" strokeDasharray="1.500 1.500" /><text x="4.500" y="13" fontSize="11">T</text><path d="M10 1l4 1-2 3" /></g> },
  ],
];

const Rule = () => <div className="h-[2px] border-t border-[#888] bg-white" />;

const CharacterPanel = () => (
  <section className={SMALL + ' absolute top-[720px] right-[232px] w-[216px] rounded-t-[5px] border border-[#222] bg-[#d6d6d6] text-black'}>
    <PanelHead />
    <Tabs tabs={[{ label: 'CHARACTER', width: 'w-[81px]', active: true, updown: true }]} />
    <div className="px-[7px] pt-[8px] pb-[8px]">
      <div className="flex flex-col gap-[6px] px-1 pb-[6px]">
        <PickList name="Font family" value="Myriad Pro" width="w-[191px]" />
        <PickList name="Font style" value="Regular" width="w-[191px]" />
      </div>
      {CHAR_FIELDS.map((block, i) => (
        <div key={i}>
          <Rule />
          <div className="grid grid-cols-[100px_1fr] gap-y-[5px] pt-[6px] pb-[5px] pl-1">
            {block.map((f) => (
              <div key={f.n} className="flex items-center gap-[2px]">
                <svg viewBox="0 0 17 17" className="h-4 w-[17px] shrink-0">{f.a}</svg>
                <Field name={f.n} value={f.v} width="w-[41px]" stepper drop />
              </div>
            ))}
          </div>
        </div>
      ))}
      <Rule />
      <div className="flex gap-[6px] px-1 py-[3px]">
        <button type="button" aria-label="Underline" className="h-[18px] w-[22px] border border-[#8a8a8a] bg-[#f0f0f0] font-['Liberation_Serif',serif] text-[14px] font-bold leading-none underline">T</button>
        <button type="button" aria-label="Strikethrough" className="h-[18px] w-[22px] border border-[#8a8a8a] bg-[#f0f0f0] font-['Liberation_Serif',serif] text-[13px] font-bold leading-none line-through">T</button>
      </div>
      <Rule />
      <label className="mt-[3px] flex items-center pl-4">
        <span className="w-[53px]">Language:</span>
        <span className="relative">
          <select className={SMALL + ' block h-[18px] w-24 appearance-none rounded-[4px] border border-[#777] bg-linear-to-b from-white to-[#e6e6e6] pl-[6px]'}>
            <option>English: USA</option>
          </select>
          <span className="pointer-events-none absolute top-0 right-0 flex h-[18px] w-[18px] flex-col items-center justify-center gap-[3px] rounded-r-[4px] border border-[#4a7fa8] bg-linear-to-b from-[#a5cdf2] via-[#6fb2ec] to-[#b4f2fd]">
            <Tri dir="up" className="h-1 w-[5px]" />
            <Tri className="h-1 w-[5px]" />
          </span>
        </span>
      </label>
    </div>
  </section>
);

/* ---------- context menu ---------- */

const MAIN_MENU = [
  [{ t: 'Undo Color' }, { t: 'Redo', off: true }],
  [{ t: 'Isolate Selected Path' }, { t: 'Group' }, { t: 'Join' }, { t: 'Average...' }],
  [{ t: 'Make Clipping Mask' }, { t: 'Make Compound Path' }, { t: 'Make Guides' }],
  [{ t: 'Transform', on: true, sub: true }, { t: 'Arrange', sub: true }, { t: 'Select', sub: true }],
];
const SUB_MENU = [
  [{ t: 'Transform Again', key: '⌘D' }],
  [{ t: 'Move...', key: '⇧⌘M' }, { t: 'Rotate...' }, { t: 'Reflect...' }, { t: 'Scale...', on: true }, { t: 'Shear...' }],
  [{ t: 'Transform Each...', key: '⌥⇧⌘D' }],
  [{ t: 'Reset Bounding Box' }],
];

const PopupMenu = ({ groups, className }) => (
  <div role="menu" className={'absolute rounded-[5px] bg-white/95 pt-[3px] pb-[5px] text-[14px] leading-[19px] text-black shadow-[0_6px_14px_rgba(0,0,0,0.45),0_0_1px_rgba(0,0,0,0.5)] ' + className}>
    {groups.map((items, i) => (
      <div key={i} className={i ? 'mt-[6px] border-t border-[#dedede] pt-[5px]' : ''}>
        {items.map((it) => (
          <button
            key={it.t}
            type="button"
            role="menuitem"
            className={
              'flex h-[19px] w-full items-center justify-between pr-[11px] pl-[21px] ' +
              (it.on ? 'bg-linear-to-b from-[#6390f0] to-[#1c5fe6] text-white' : it.off ? 'text-[#9a9a9a]' : '')
            }
          >
            <span>{it.t}</span>
            {it.key && <span className="font-['Noto_Sans','DejaVu_Sans',sans-serif]">{it.key}</span>}
            {it.sub && <Tri dir="right" className={'h-[10px] w-[9px] ' + (it.on ? 'text-white' : 'text-[#666]')} />}
          </button>
        ))}
      </div>
    ))}
  </div>
);

/* ---------- page ---------- */

const App = () => (
  <div className={UI + ' relative flex h-screen flex-col overflow-hidden bg-[#9c8458]'}>
    <MenuBar />
    <div className="ml-[2px] flex min-h-0 flex-1 flex-col">
      <TitleBar />
      <ControlBar />
      <div className="flex min-h-0 flex-1">
        <ToolBox />
        <Document />
        <div className="flex w-[90px] shrink-0 items-end">
          <div className="flex h-[56px] w-[27px] flex-col bg-[#b8b8b8] pt-[19px]"><span className="h-[13px] bg-[#f2f2f2]" /></div>
          <div className="h-16 flex-1 overflow-hidden bg-[repeating-linear-gradient(125deg,#6d5426_0_5px,#a58a52_9px_12px,#c9b482_16px,#6d5426_21px)] text-[13px] font-semibold leading-[15px] whitespace-nowrap text-white [text-shadow:0_1px_2px_#000]">
            <p className="pl-1">Screen</p>
            <p className="-ml-1">0.27 AM</p>
          </div>
        </div>
      </div>
    </div>
    <Dock />
    <ParagraphPanel />
    <CharacterPanel />
    <PopupMenu groups={MAIN_MENU} className="top-[416px] left-[594px] w-[189px]" />
    <PopupMenu groups={SUB_MENU} className="top-[623px] left-[783px] w-[226px]" />
  </div>
);

export default App;
